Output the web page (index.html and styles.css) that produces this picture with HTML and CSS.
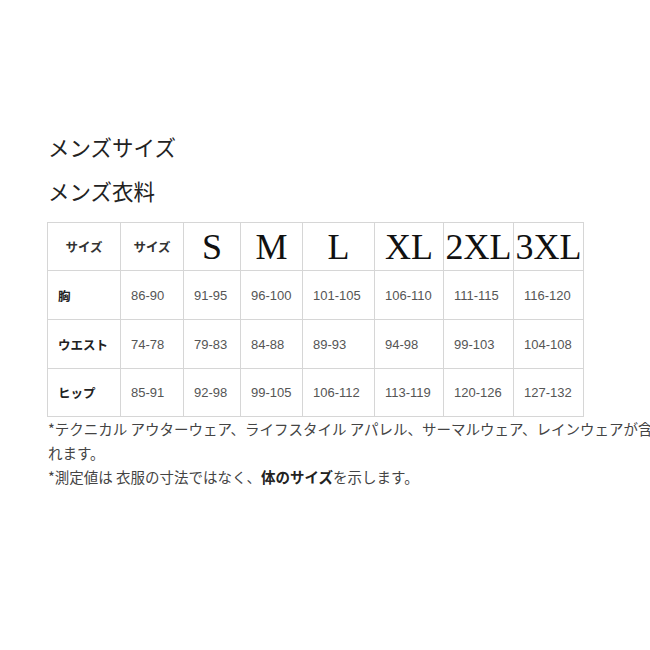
FILE: index.html
```html
<!DOCTYPE html>
<html lang="ja">
<head>
<meta charset="utf-8">
<title>メンズサイズ</title>
<link rel="stylesheet" href="styles.css">
</head>
<body>
<main class="page">
  <h2 class="title">メンズサイズ</h2>
  <h3 class="subtitle">メンズ衣料</h3>
  <table class="size-table">
    <colgroup>
      <col class="c1"><col class="c2"><col class="c3"><col class="c4"><col class="c5"><col class="c6"><col class="c7"><col class="c8">
    </colgroup>
    <thead>
      <tr class="head-row">
        <th class="label-head">サイズ</th>
        <th class="label-head">サイズ</th>
        <th class="size">S</th>
        <th class="size">M</th>
        <th class="size">L</th>
        <th class="size">XL</th>
        <th class="size">2XL</th>
        <th class="size">3XL</th>
      </tr>
    </thead>
    <tbody>
      <tr class="r1">
        <td class="label">胸</td>
        <td>86-90</td><td>91-95</td><td>96-100</td><td>101-105</td><td>106-110</td><td>111-115</td><td>116-120</td>
      </tr>
      <tr class="r2">
        <td class="label">ウエスト</td>
        <td>74-78</td><td>79-83</td><td>84-88</td><td>89-93</td><td>94-98</td><td>99-103</td><td>104-108</td>
      </tr>
      <tr class="r3">
        <td class="label">ヒップ</td>
        <td>85-91</td><td>92-98</td><td>99-105</td><td>106-112</td><td>113-119</td><td>120-126</td><td>127-132</td>
      </tr>
    </tbody>
  </table>
  <p class="note">*テクニカル アウターウェア、ライフスタイル アパレル、サーマルウェア、レインウェアが含ま<br>れます。</p>
  <p class="note">*測定値は 衣服の寸法ではなく、<strong>体のサイズ</strong>を示します。</p>
</main>
</body>
</html>
```

FILE: styles.css
```css
html, body {
  margin: 0;
  padding: 0;
  background: #ffffff;
  overflow: hidden;
}

.page {
  padding: 132px 0 0 48px;
  width: 700px;
  font-family: "Liberation Sans", Arial, "Noto Sans CJK JP", sans-serif;
  color: #333;
}

.title,
.subtitle {
  margin: 0;
  font-family: "Noto Sans CJK JP", sans-serif;
  font-weight: 400;
  font-size: 21.5px;
  line-height: 30px;
  color: #222;
}

.subtitle {
  margin-top: 14px;
}

.size-table {
  margin: 16px 0 0 -1px;
  border-collapse: collapse;
  table-layout: fixed;
  width: 536px;
}

.c1 { width: 73px; }
.c2 { width: 63px; }
.c3 { width: 57px; }
.c4 { width: 62px; }
.c5 { width: 72px; }
.c6 { width: 69px; }
.c7 { width: 70px; }
.c8 { width: 70px; }

.size-table th,
.size-table td {
  border: 1px solid #d6d6d6;
  padding: 0 0 0 10px;
  vertical-align: middle;
  white-space: nowrap;
}

.size-table td {
  font-size: 13px;
  color: #555;
  text-align: left;
}

.head-row { height: 48px; }
.r1, .r2 { height: 49px; }
.r3 { height: 48px; }

.label-head {
  font-family: "Noto Sans CJK JP", sans-serif;
  font-size: 12.5px;
  font-weight: 700;
  color: #333;
  text-align: center;
  padding: 0 !important;
}

.size {
  font-family: "Liberation Serif", "Times New Roman", serif;
  font-weight: 400;
  font-size: 36px;
  color: #111;
  text-align: center;
  padding: 0 !important;
  line-height: 40px;
}

.size-table td.label {
  font-family: "Noto Sans CJK JP", sans-serif;
  font-size: 12.5px;
  font-weight: 700;
  color: #222;
}

.note {
  margin: 0;
  font-family: "Noto Sans CJK JP", sans-serif;
  font-size: 14.5px;
  line-height: 24px;
  color: #444;
  white-space: nowrap;
}

.note strong {
  font-weight: 700;
  color: #222;
}
```
